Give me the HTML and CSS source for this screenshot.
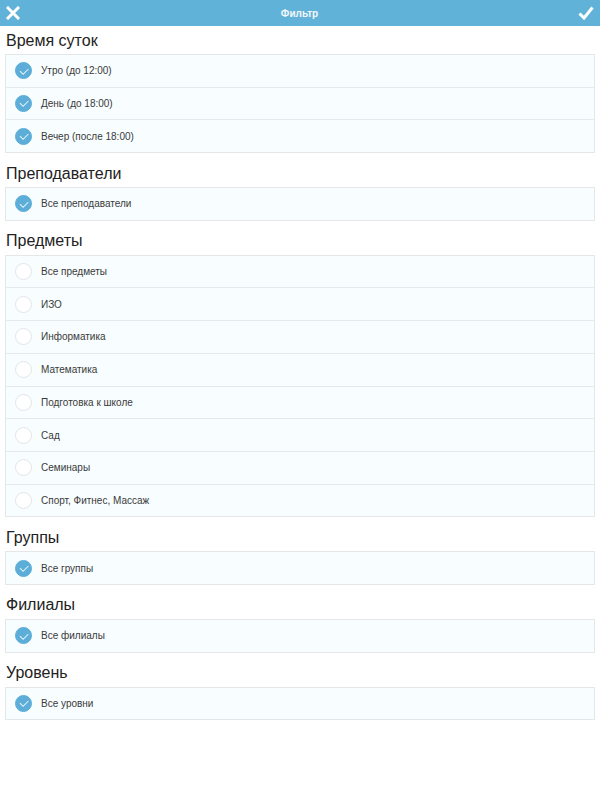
FILE: index.html
```html
<!DOCTYPE html>
<html lang="ru">
<head>
<meta charset="utf-8">
<title>Фильтр</title>
<link rel="stylesheet" href="styles.css">
</head>
<body>
<header class="topbar">
  <button class="bar-btn" aria-label="Закрыть">
    <svg width="14" height="14" viewBox="0 0 14 14"><path d="M2 2L12 12M12 2L2 12" stroke="#fff" stroke-width="3" stroke-linecap="square"/></svg>
  </button>
  <div class="bar-title">Фильтр</div>
  <button class="bar-btn" aria-label="Применить">
    <svg width="16" height="16" viewBox="0 0 16 16"><path d="M1.5 8.5L6 13L14.5 2.5" fill="none" stroke="#fff" stroke-width="3"/></svg>
  </button>
</header>

<main class="content">
  <section class="group">
    <h2 class="group-title">Время суток</h2>
    <ul class="list">
      <li class="row"><span class="check on"></span>Утро (до 12:00)</li>
      <li class="row"><span class="check on"></span>День (до 18:00)</li>
      <li class="row"><span class="check on"></span>Вечер (после 18:00)</li>
    </ul>
  </section>
  <section class="group">
    <h2 class="group-title">Преподаватели</h2>
    <ul class="list">
      <li class="row"><span class="check on"></span>Все преподаватели</li>
    </ul>
  </section>
  <section class="group">
    <h2 class="group-title">Предметы</h2>
    <ul class="list">
      <li class="row"><span class="check"></span>Все предметы</li>
      <li class="row"><span class="check"></span>ИЗО</li>
      <li class="row"><span class="check"></span>Информатика</li>
      <li class="row"><span class="check"></span>Математика</li>
      <li class="row"><span class="check"></span>Подготовка к школе</li>
      <li class="row"><span class="check"></span>Сад</li>
      <li class="row"><span class="check"></span>Семинары</li>
      <li class="row"><span class="check"></span>Спорт, Фитнес, Массаж</li>
    </ul>
  </section>
  <section class="group">
    <h2 class="group-title">Группы</h2>
    <ul class="list">
      <li class="row"><span class="check on"></span>Все группы</li>
    </ul>
  </section>
  <section class="group">
    <h2 class="group-title">Филиалы</h2>
    <ul class="list">
      <li class="row"><span class="check on"></span>Все филиалы</li>
    </ul>
  </section>
  <section class="group">
    <h2 class="group-title">Уровень</h2>
    <ul class="list">
      <li class="row"><span class="check on"></span>Все уровни</li>
    </ul>
  </section>
</main>
</body>
</html>
```

FILE: styles.css
```css
* { box-sizing: border-box; }
html, body { margin: 0; padding: 0; background: #fff; }
body { font-family: "Liberation Sans", Arial, sans-serif; color: #333; }

.topbar {
  height: 26px;
  background: #61b2d8;
  display: flex;
  align-items: center;
  justify-content: space-between;
  padding: 0 6px 0 5px;
}
.bar-btn {
  border: 0;
  background: none;
  padding: 0;
  width: 16px;
  height: 16px;
  display: flex;
  align-items: center;
  justify-content: center;
}
.bar-title {
  color: #fff;
  font-size: 10px;
  font-weight: bold;
  opacity: 0.92;
}

.content { padding: 0 5px; }
.group { margin-top: 6px; }
.group:first-child { margin-top: 0; }
.group-title {
  margin: 0;
  height: 28px;
  display: flex;
  align-items: center;
  padding: 1px 0 0 1px;
  font-size: 16px;
  font-weight: normal;
  color: #222;
}
.list {
  list-style: none;
  margin: 0;
  padding: 0;
  border: 1px solid #e4e7e8;
  background: #f8fdff;
}
.row {
  height: 32.7px;
  display: flex;
  align-items: center;
  padding-left: 9px;
  font-size: 10px;
  color: #3a3a3a;
  border-top: 1px solid #e6e9ea;
}
.row:first-child { height: 31.7px; border-top: 0; }
.check {
  width: 17px;
  height: 17px;
  border-radius: 50%;
  background: #fff;
  border: 1px solid #e2e5e7;
  margin-right: 9px;
  flex: none;
  display: flex;
  align-items: center;
  justify-content: center;
}
.check.on {
  background: #5caed8;
  border-color: #5caed8;
}
.check.on::after {
  content: "";
  width: 7px;
  height: 3.5px;
  border-left: 1px solid rgba(255,255,255,0.85);
  border-bottom: 1px solid rgba(255,255,255,0.85);
  transform: translateY(-1px) rotate(-45deg);
}
```
